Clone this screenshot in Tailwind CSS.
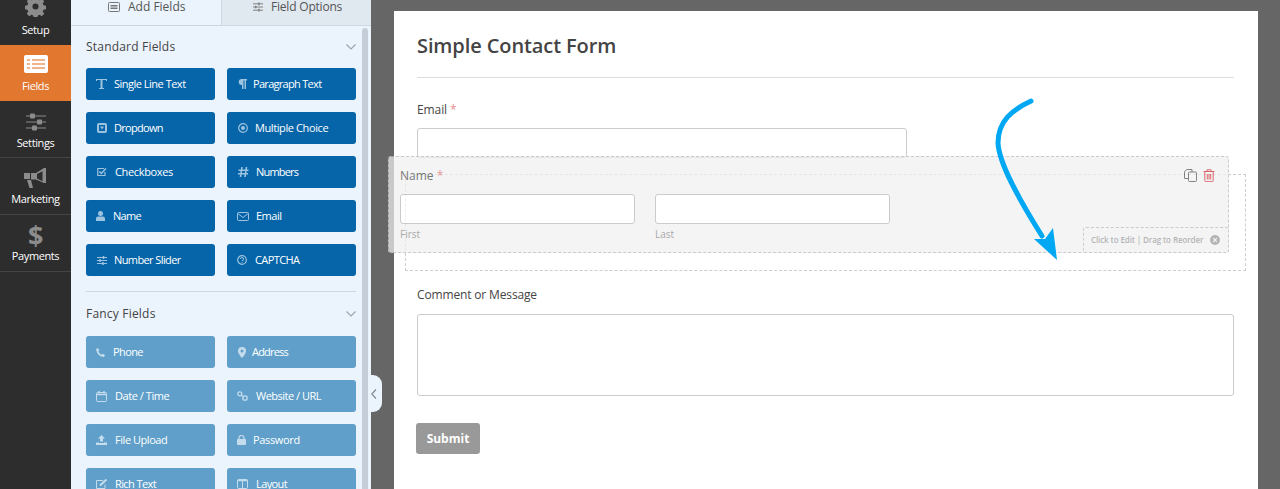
<!DOCTYPE html>
<html><head><meta charset="utf-8"><script src="https://cdn.jsdelivr.net/npm/@tailwindcss/browser@4"></script></head>
<body class="m-0 overflow-hidden bg-[#666666]">
<div class="flex h-[489px] w-[1280px] overflow-hidden font-['Open_Sans',sans-serif]">
  <!-- sidebar -->
  <nav class="w-[71px] shrink-0 bg-[#2d2d2d] text-white text-[11px] leading-[14px] tracking-[-0.4px] text-center">
    <div class="h-[45px] flex flex-col items-center justify-end pb-[8px] gap-[6px] overflow-hidden">
      <svg class="w-[21px] h-[21px] shrink-0" viewBox="0 0 24 24" fill="#8c8c8c"><path d="M10 1h4l.6 3 2 .9 2.600-1.700 2.800 2.800-1.700 2.600.9 2 3 .6v4l-3 .6-.9 2 1.700 2.600-2.800 2.800-2.600-1.700-2 .9-.6 3h-4l-.6-3-2-.9-2.600 1.700-2.800-2.800 1.700-2.600-.9-2-3-.6v-4l3-.6.9-2-1.700-2.600 2.800-2.800 2.600 1.700 2-.9zM12 8.500a3.500 3.500 0 1 0 0 7 3.500 3.500 0 0 0 0-7z" fill-rule="evenodd"/></svg>
      <span>Setup</span>
    </div>
    <div class="h-[56px] bg-[#e27730] flex flex-col items-center pt-[10px] gap-[6px]">
      <svg class="w-[24px] h-[18px]" viewBox="0 0 24 18"><rect width="24" height="18" rx="2" fill="#fff"/><path d="M3 4h3v2H3zM8 4h13v2H8zM3 8h3v2H3zM8 8h13v2H8zM3 12h3v2H3zM8 12h13v2H8z" fill="#f0b48c"/></svg>
      <span>Fields</span>
    </div>
    <div class="h-[57px] border-b border-[#444] flex flex-col items-center pt-[12px] gap-[5px]">
      <svg class="w-[20px] h-[18px]" viewBox="0 0 20 18" fill="#8c8c8c"><path d="M0 2.500h20v1H0zM0 8.500h20v1H0zM0 14.500h20v1H0z"/><rect x="4" y="0.500" width="5" height="5" rx="1"/><rect x="11" y="6.500" width="5" height="5" rx="1"/><rect x="6" y="12.500" width="5" height="5" rx="1"/></svg>
      <span>Settings</span>
    </div>
    <div class="h-[57px] border-b border-[#444] flex flex-col items-center pt-[10px] gap-[4px]">
      <svg class="w-[23px] h-[20px]" viewBox="0 0 23 20" fill="#8c8c8c"><path d="M20 0h2v15h-2l-8-3.500H7V5h5zM18.500 3.300 13 6v4.500l5.500 2.700zM0 5h6v6H0zM3 12h4l2 8H5.500z" fill-rule="evenodd"/></svg>
      <span>Marketing</span>
    </div>
    <div class="h-[57px] border-b border-[#444] flex flex-col items-center pt-[6px]">
      <span class="text-[#8c8c8c] text-[27px] leading-[27px] font-bold">$</span>
      <span class="mt-[1px]">Payments</span>
    </div>
  </nav>
  <!-- builder panel -->
  <aside class="relative w-[300px] shrink-0 bg-[#ebf3fc] text-[#444]">
    <div class="flex h-[26px] border-b border-[#ced7e0] text-[12px] leading-[14px] text-[#555]">
      <div class="w-[150px] h-[25px] flex items-start pl-[37px] gap-[8px]">
        <svg class="w-[12px] h-[10px] mt-[2px]" viewBox="0 0 12 10" fill="none" stroke="#777"><rect x=".5" y=".5" width="11" height="9" rx="1"/><path d="M2.500 3.500h7M2.500 5h7M2.500 6.500h7"/></svg>
        <span>Add Fields</span>
      </div>
      <div class="flex-1 h-[25px] bg-[#e0e8f0] border-l border-[#ced7e0] flex items-start pl-[31px] gap-[8px] tracking-[-0.2px]">
        <svg class="w-[10px] h-[10px] mt-[2px]" viewBox="0 0 11 10" fill="none" stroke="#777"><path d="M0 1.500h11M0 5h11M0 8.500h11"/><path d="M6.500 0v3M3 3.500v3M6.500 7v3" stroke-width="1.500"/></svg>
        <span>Field Options</span>
      </div>
    </div>
    <div class="absolute right-[3px] top-[28px] bottom-[-20px] w-[6px] rounded-[3px] bg-[#c5ced8]"></div>
    <div class="pl-[15px] pr-[15px]">
      <div class="flex items-center justify-between h-[20px] mt-[11px] text-[12px] tracking-[0.2px] font-medium">
        <span>Standard Fields</span>
        <svg class="w-[10px] h-[6px]" viewBox="0 0 10 6" fill="none" stroke="#9aa5b0" stroke-width="1.200"><path d="M.5.500 5 5 9.500.5"/></svg>
      </div>
      <div class="grid grid-cols-2 gap-x-[12px] gap-y-[12px] mt-[11px] text-[11px] tracking-[-0.5px] text-white font-medium">
        <div class="h-[32px] rounded-[3px] bg-[#0665a9] flex items-center pl-[10px] gap-[7px]"><svg class="w-[11px] h-[10px]" viewBox="0 0 11 10" fill="#9cc3df"><path d="M0 0h11v2H10V1H6.500v8H8v1H3V9h1.500V1H1v1H0z"/></svg><span>Single Line Text</span></div>
        <div class="h-[32px] rounded-[3px] bg-[#0665a9] flex items-center pl-[11px] gap-[6px]"><svg class="w-[9px] h-[10px]" viewBox="0 0 9 10" fill="#9cc3df"><path d="M3.500 0H9v1.500H8V10H6.500V1.500h-1V10H4V6a3 3 0 0 1-.5-6z"/></svg><span class="tracking-[-0.7px]">Paragraph Text</span></div>
        <div class="h-[32px] rounded-[3px] bg-[#0665a9] flex items-center pl-[11px] gap-[7px]"><svg class="w-[10px] h-[10px]" viewBox="0 0 10 10"><rect width="10" height="10" rx="2" fill="#9cc3df"/><path d="M2 2h6v6H2z" fill="#0665a9"/><path d="M3 3.500h4L5 6.500z" fill="#9cc3df"/></svg><span class="tracking-[-0.7px]">Dropdown</span></div>
        <div class="h-[32px] rounded-[3px] bg-[#0665a9] flex items-center pl-[11px] gap-[7px]"><svg class="w-[10px] h-[10px]" viewBox="0 0 10 10"><circle cx="5" cy="5" r="4.300" fill="none" stroke="#9cc3df" stroke-width="1.200"/><circle cx="5" cy="5" r="2" fill="#9cc3df"/></svg><span class="tracking-[-0.4px]">Multiple Choice</span></div>
        <div class="h-[32px] rounded-[3px] bg-[#0665a9] flex items-center pl-[11px] gap-[8px]"><svg class="w-[10px] h-[10px]" viewBox="0 0 10 10" fill="none" stroke="#9cc3df" stroke-width="1.200"><path d="M8 5v3.500H.8V1.500H7"/><path d="M2.500 4.500 4.300 6.500 9 1.500" stroke-width="1.500"/></svg><span class="tracking-[-0.35px]">Checkboxes</span></div>
        <div class="h-[32px] rounded-[3px] bg-[#0665a9] flex items-center pl-[11px] gap-[7px]"><svg class="w-[11px] h-[10px]" viewBox="0 0 11 10" fill="none" stroke="#9cc3df" stroke-width="1.600"><path d="M4 0 2.500 10M8.500 0 7 10M0.500 3.300h10M0 6.800h10"/></svg><span class="tracking-[-0.8px]">Numbers</span></div>
        <div class="h-[32px] rounded-[3px] bg-[#0665a9] flex items-center pl-[10px] gap-[8px]"><svg class="w-[9px] h-[10px]" viewBox="0 0 9 10" fill="#9cc3df"><circle cx="4.500" cy="2.500" r="2.500"/><path d="M0 10V7.500Q0 5.500 2 5.500h5q2 0 2 2V10z"/></svg><span class="tracking-[-0.7px]">Name</span></div>
        <div class="h-[32px] rounded-[3px] bg-[#0665a9] flex items-center pl-[10px] gap-[7px]"><svg class="w-[12px] h-[9px]" viewBox="0 0 12 9" fill="none" stroke="#9cc3df"><rect x=".5" y=".5" width="11" height="8" rx="1"/><path d="M.8 1.500 6 5.500l5.200-4"/></svg><span>Email</span></div>
        <div class="h-[32px] rounded-[3px] bg-[#0665a9] flex items-center pl-[11px] gap-[7px]"><svg class="w-[10px] h-[9px]" viewBox="0 0 10 9" fill="none" stroke="#9cc3df"><path d="M0 1.500h10M0 4.500h10M0 7.500h10"/><path d="M6.500 0v3M3 3v3M6 6v3" stroke-width="1.500"/></svg><span class="tracking-[-0.6px]">Number Slider</span></div>
        <div class="h-[32px] rounded-[3px] bg-[#0665a9] flex items-center pl-[10px] gap-[8px]"><svg class="w-[10px] h-[10px]" viewBox="0 0 10 10"><circle cx="5" cy="5" r="4.300" fill="none" stroke="#9cc3df" stroke-width="1.200"/><path d="M3.500 4q0-1.500 1.500-1.500T6.500 4 5 5.800" fill="none" stroke="#9cc3df"/><path d="M4.500 6.800h1v1h-1z" fill="#9cc3df"/></svg><span class="tracking-[-0.6px]">CAPTCHA</span></div>
      </div>
      <div class="h-px bg-[#ced7e3] mt-[15px]"></div>
      <div class="flex items-center justify-between h-[20px] mt-[12px] text-[12px] tracking-[0.2px] font-medium">
        <span>Fancy Fields</span>
        <svg class="w-[10px] h-[6px]" viewBox="0 0 10 6" fill="none" stroke="#9aa5b0" stroke-width="1.200"><path d="M.5.500 5 5 9.500.5"/></svg>
      </div>
      <div class="grid grid-cols-2 gap-x-[12px] gap-y-[12px] mt-[12px] text-[11px] tracking-[-0.5px] text-white font-medium">
        <div class="h-[32px] rounded-[3px] bg-[#5f9fca] flex items-center pl-[10px] gap-[8px]"><svg class="w-[9px] h-[9px]" viewBox="0 0 9 9" fill="#c4dcec"><path d="M2 0 3.300 2.500 2.300 3.500Q3.300 5.700 5.500 6.700l1-1L9 7 8 9Q1.500 9 0 1z"/></svg><span class="tracking-[-0.6px]">Phone</span></div>
        <div class="h-[32px] rounded-[3px] bg-[#5f9fca] flex items-center pl-[11px] gap-[6px]"><svg class="w-[8px] h-[11px]" viewBox="0 0 8 11" fill="#c4dcec"><path fill-rule="evenodd" d="M4 0a4 4 0 0 1 4 4q0 2.500-4 7Q0 6.500 0 4a4 4 0 0 1 4-4zm0 2.500a1.500 1.500 0 1 0 0 3 1.500 1.500 0 0 0 0-3z"/></svg><span class="tracking-[-0.8px]">Address</span></div>
        <div class="h-[32px] rounded-[3px] bg-[#5f9fca] flex items-center pl-[10px] gap-[8px]"><svg class="w-[11px] h-[11px]" viewBox="0 0 11 11" fill="none" stroke="#c4dcec"><rect x=".5" y="1.500" width="10" height="9" rx="1"/><path d="M.5 3.500h10" stroke-width="1.500"/><path d="M3 0v2.500M8 0v2.500" stroke-width="1.500"/></svg><span class="tracking-[-0.45px]">Date / Time</span></div>
        <div class="h-[32px] rounded-[3px] bg-[#5f9fca] flex items-center pl-[10px] gap-[8px]"><svg class="w-[11px] h-[10px]" viewBox="0 0 11 10" fill="none" stroke="#c4dcec" stroke-width="1.300"><circle cx="2.800" cy="2.800" r="2"/><circle cx="8" cy="7" r="2.200"/><path d="M4 4 6.500 5.800"/></svg><span>Website / URL</span></div>
        <div class="h-[32px] rounded-[3px] bg-[#5f9fca] flex items-center pl-[10px] gap-[8px]"><svg class="w-[11px] h-[10px]" viewBox="0 0 11 10" fill="#c4dcec"><path d="M5.500 0 9 3.500H7v3H4v-3H2zM0 7.500h3V8h5v-.5h3V10H0z"/></svg><span class="tracking-[-0.45px]">File Upload</span></div>
        <div class="h-[32px] rounded-[3px] bg-[#5f9fca] flex items-center pl-[10px] gap-[7px]"><svg class="w-[9px] h-[10px]" viewBox="0 0 9 10"><rect y="4" width="9" height="6" rx="1" fill="#c4dcec"/><path d="M2 4.500V3a2.500 2.500 0 0 1 5 0v1.500" fill="none" stroke="#c4dcec" stroke-width="1.200"/></svg><span class="tracking-[-0.35px]">Password</span></div>
        <div class="h-[32px] rounded-[3px] bg-[#5f9fca] flex items-center pl-[10px] gap-[7px]"><svg class="w-[12px] h-[10px]" viewBox="0 0 12 10" fill="none" stroke="#c4dcec"><path d="M9 5.500v4H.5V1.500H7"/><path d="M4 6.500 10.500 .5" stroke-width="2"/></svg><span class="tracking-[-0.6px]">Rich Text</span></div>
        <div class="h-[32px] rounded-[3px] bg-[#5f9fca] flex items-center pl-[10px] gap-[8px]"><svg class="w-[11px] h-[10px]" viewBox="0 0 11 10" fill="none" stroke="#c4dcec"><rect x=".5" y=".5" width="10" height="9" rx="1"/><path d="M5.500 0v10"/><path d="M.5 1.500h10" stroke-width="1.500"/></svg><span class="tracking-[-0.6px]">Layout</span></div>
      </div>
    </div>
    <div class="absolute right-[-11px] top-[375px] w-[11px] h-[37px] bg-[#ebf3fc] rounded-r-[9px] flex items-center">
      <svg class="w-[6px] h-[10px] ml-[0px]" viewBox="0 0 6 10" fill="none" stroke="#7e8a96" stroke-width="1.200"><path d="M5 .5.800 5 5 9.500"/></svg>
    </div>
  </aside>
  <!-- canvas -->
  <main class="flex-1 pl-[23px] pt-[11px]">
    <div class="relative w-[864px] h-[520px] bg-white pl-[22px] pr-[24px] text-[#444]">
      <h1 class="pt-[21px] ml-px text-[20px] leading-[27px] font-semibold tracking-[-0.1px] text-[#444] m-0">Simple Contact Form</h1>
      <div class="h-px ml-px bg-[#ddd] mt-[18px]"></div>
      <div class="text-[12px] leading-[16px] mt-[24px] ml-px font-medium tracking-[-0.1px]">Email <span class="text-[#d63638]/60">*</span></div>
      <div class="h-[30px] w-[490px] ml-px mt-[10px] rounded-[3px] border border-[#ccc] bg-white"></div>
      <div class="h-[97px] -mr-[12px] ml-[-11px] mt-[16px] border border-dashed border-[#ccc]"></div>
      <div class="text-[12px] leading-[16px] mt-[16px] ml-px font-medium tracking-[-0.15px]">Comment or Message</div>
      <div class="h-[82px] w-[817px] ml-px mt-[11px] rounded-[3px] border border-[#ccc] bg-white"></div>
      <div class="w-[64px] h-[31px] mt-[27px] pt-px rounded-[3px] bg-[#999] text-white text-[12px] font-bold flex items-center justify-center">Submit</div>

      <!-- dragged field -->
      <div class="absolute left-[-6px] top-[145px] w-[841px] h-[97px] rounded-[3px] border border-dashed border-[#b8b8b8] bg-[#f0f0f0] opacity-[.72] px-[11px]">
        <div class="text-[12px] leading-[16px] mt-[11px] font-medium text-[#444]">Name <span class="text-[#d63638]/70">*</span></div>
        <div class="flex gap-[20px] mt-[10px]">
          <div class="w-[235px]">
            <div class="h-[30px] rounded-[3px] border border-[#b8b8b8] bg-white"></div>
            <div class="text-[10px] leading-[14px] mt-[3px] text-[#888]">First</div>
          </div>
          <div class="w-[235px]">
            <div class="h-[30px] rounded-[3px] border border-[#b8b8b8] bg-white"></div>
            <div class="text-[10px] leading-[14px] mt-[3px] text-[#888]">Last</div>
          </div>
        </div>
        <svg class="absolute right-[31px] top-[12px] w-[13px] h-[13px]" viewBox="0 0 13 13" fill="none" stroke="#555"><rect x="4.500" y="3" width="8" height="9.500" rx="1"/><path d="M4.500 9.500H.5V2.500L3 .5h5V3"/></svg>
        <svg class="absolute right-[13px] top-[12px] w-[12px] h-[13px]" viewBox="0 0 12 13" fill="none" stroke="#cc2f38"><path d="M.5 2.500h11M4 2.500V.8h4v1.700M1.800 2.500v9.200q0 1 1 1h6.400q1 0 1-1V2.500M4.300 5v5.500M6 5v5.500M7.700 5v5.500"/></svg>
        <div class="absolute right-[-1px] bottom-[-1px] w-[146px] h-[26px] rounded-[3px] border border-dashed border-[#b8b8b8] bg-[#f0f0f0] flex items-center pl-[7px] gap-[7px] text-[8px] tracking-[-0.1px] text-[#999] font-semibold">
          <span>Click to Edit | Drag to Reorder</span>
          <svg class="w-[10px] h-[10px]" viewBox="0 0 10 10"><circle cx="5" cy="5" r="5" fill="#999"/><path d="M3.200 3.200l3.600 3.600M6.800 3.200 3.200 6.800" stroke="#eee" stroke-width="1.200"/></svg>
        </div>
      </div>

      <!-- annotation arrow -->
      <svg class="absolute left-[596px] top-[80px] w-[80px] h-[175px]" viewBox="0 0 80 175" fill="none">
        <path d="M41 10C22 19 8 30 8 52C9 72 27 105 52 145" stroke="#00a8f3" stroke-width="5" stroke-linecap="round"/>
        <path d="M67 169 44 148 55 148 63 137z" fill="#00a8f3"/>
      </svg>
    </div>
  </main>
</div>
</body></html>
